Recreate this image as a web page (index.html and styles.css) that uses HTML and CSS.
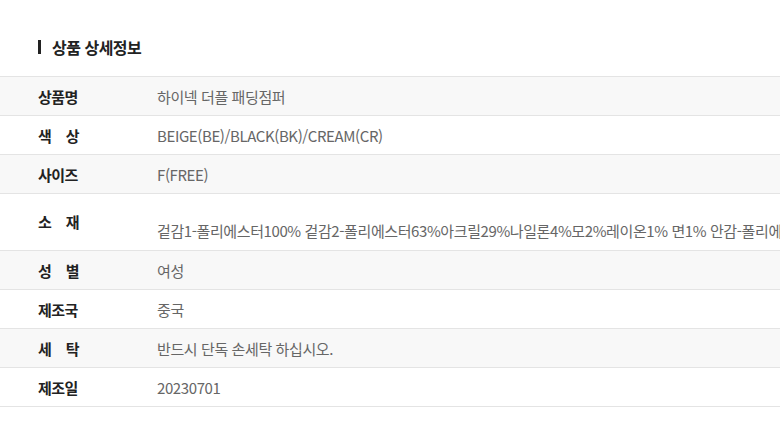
FILE: index.html
```html
<!DOCTYPE html>
<html lang="ko">
<head>
<meta charset="utf-8">
<link rel="stylesheet" href="styles.css">
</head>
<body>
<div class="page">
  <h2 class="title">상품 상세정보</h2>
  <div class="table">
    <div class="row alt"><div class="label">상품명</div><div class="value">하이넥 더플 패딩점퍼</div></div>
    <div class="row"><div class="label"><span class="spread"><span>색</span><span>상</span></span></div><div class="value">BEIGE(BE)/BLACK(BK)/CREAM(CR)</div></div>
    <div class="row alt"><div class="label">사이즈</div><div class="value">F(FREE)</div></div>
    <div class="row tall"><div class="label"><span class="spread"><span>소</span><span>재</span></span></div><div class="value">겉감1-폴리에스터100% 겉감2-폴리에스터63%아크릴29%나일론4%모2%레이온1% 면1% 안감-폴리에스터100% 충전재-폴리에스터100%</div></div>
    <div class="row alt"><div class="label"><span class="spread"><span>성</span><span>별</span></span></div><div class="value">여성</div></div>
    <div class="row"><div class="label">제조국</div><div class="value">중국</div></div>
    <div class="row alt"><div class="label"><span class="spread"><span>세</span><span>탁</span></span></div><div class="value">반드시 단독 손세탁 하십시오.</div></div>
    <div class="row"><div class="label">제조일</div><div class="value">20230701</div></div>
  </div>
</div>
</body>
</html>
```
FILE: styles.css
```css
html, body {
  margin: 0;
  padding: 0;
  background: #fff;
  overflow: hidden;
}
.page {
  font-family: "Noto Sans CJK KR", "Noto Sans", sans-serif;
  padding-top: 40px;
}
.title {
  margin: 0 0 22px 38px;
  padding-left: 11px;
  border-left: 3px solid #222;
  font-size: 16px;
  font-weight: 700;
  color: #222;
  line-height: 14px;
  letter-spacing: -0.5px;
}
.table {
  border-top: 1px solid #e4e4e4;
}
.row {
  display: flex;
  align-items: center;
  height: 38px;
  border-bottom: 1px solid #e4e4e4;
  background: #fff;
  white-space: nowrap;
  overflow: hidden;
}
.row.alt {
  background: #f8f8f8;
}
.row.tall {
  height: 56px;
}
.label {
  flex: 0 0 118px;
  padding-left: 38px;
  box-sizing: content-box;
  font-size: 15px;
  font-weight: 700;
  color: #222;
  letter-spacing: -0.6px;
}
.spread {
  display: flex;
  justify-content: space-between;
  width: 41px;
}
.value {
  padding-left: 1px;
  font-size: 15px;
  color: #666;
  letter-spacing: -0.4px;
}
.row.tall .label {
  padding-bottom: 2px;
}
.row.tall .value {
  padding-top: 16px;
}
```
